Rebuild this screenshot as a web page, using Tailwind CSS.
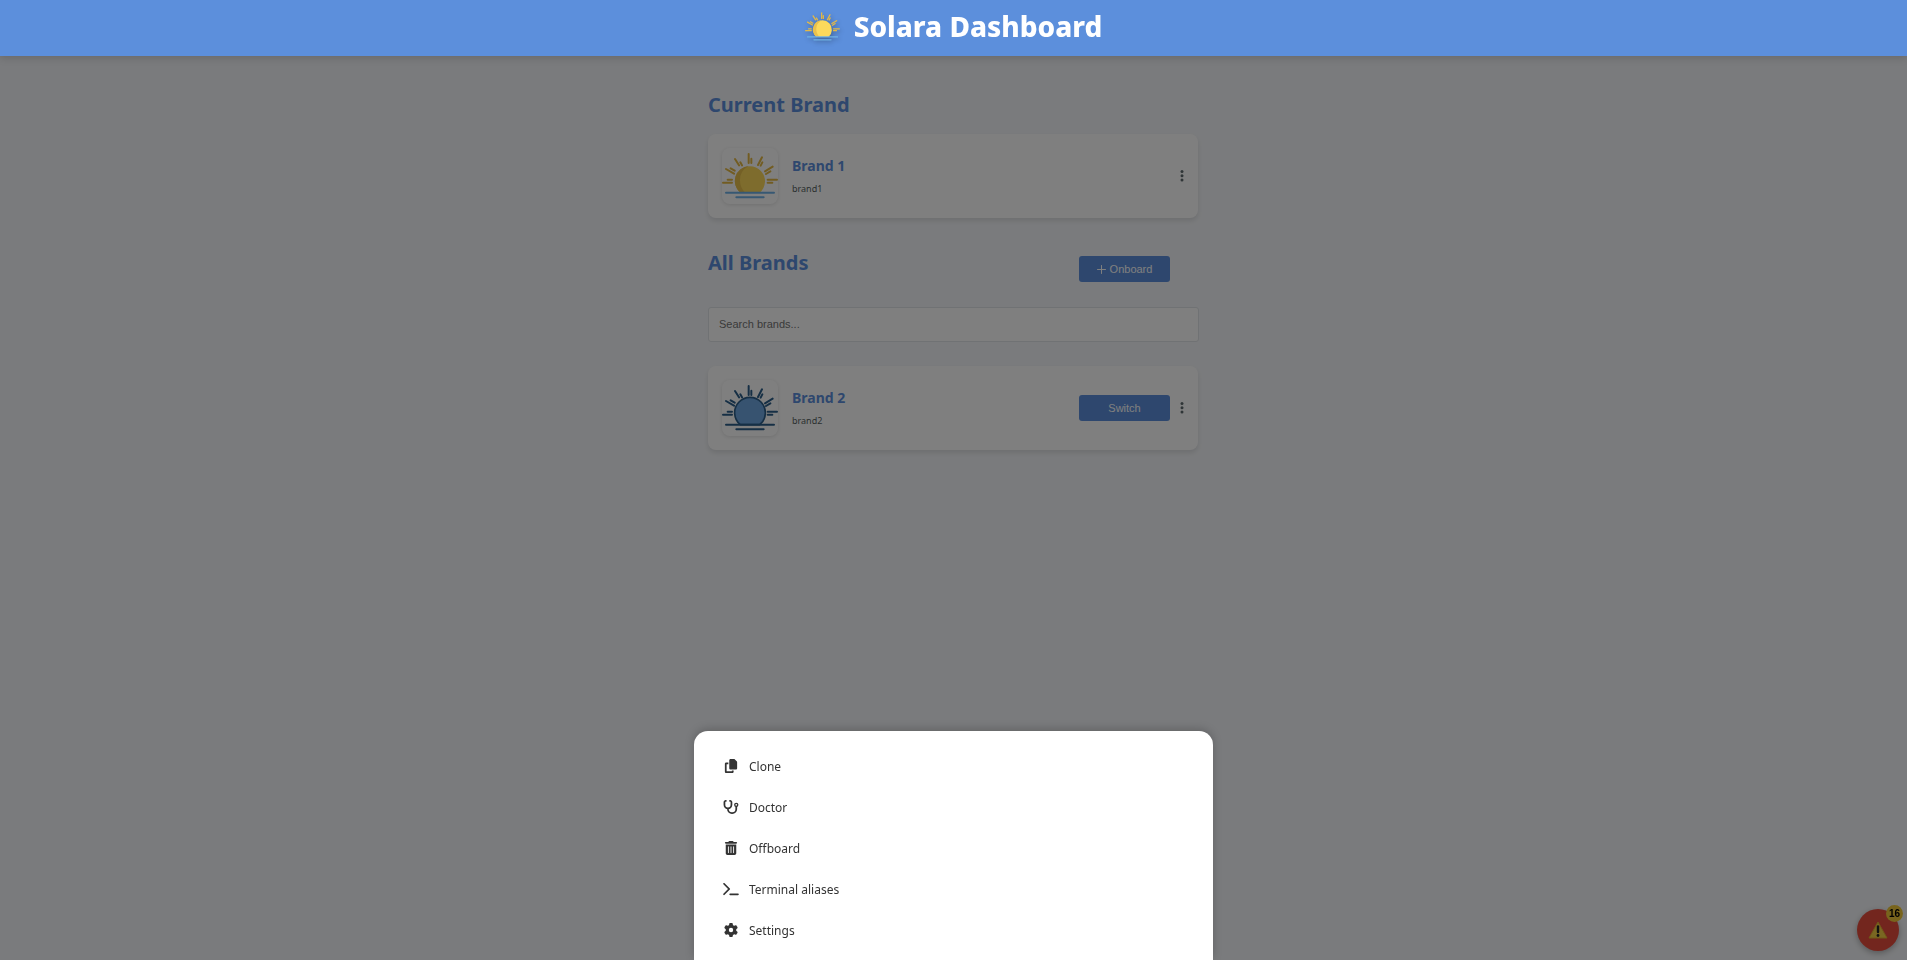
<!DOCTYPE html>
<html lang="en">
<head>
<meta charset="utf-8">
<meta name="viewport" content="width=device-width, initial-scale=1">
<title>Solara Dashboard</title>
<script src="https://cdn.jsdelivr.net/npm/@tailwindcss/browser@4"></script>
</head>
<body class="min-h-screen bg-[#f5f7fa] font-['Noto_Sans',sans-serif] text-[#333]">

<!-- Shared icon shapes -->
<svg class="hidden" aria-hidden="true">
  <symbol id="rays" viewBox="0 0 168 168">
    <g fill="none" stroke="currentColor" stroke-width="6" stroke-linecap="round">
      <path d="M80 18V45M88 32V45M39 33L51 52M55 43L60 52M12 63L36 77M26 61L38 68M3 104H30M17 95H30M137 95H165M137 104H151M129 70L152 56M132 78L145 70M120 28L108 51M121 43L116 53"/>
    </g>
  </symbol>
  <symbol id="sun-yellow" viewBox="0 0 168 168">
    <use href="#rays" width="168" height="168" color="#e5b944"/>
    <path d="M55 134A45 45 0 1 1 113 134Z" fill="#fcd95b"/>
    <path d="M55 134A45 45 0 0 1 80 54Q54 68 54 96Q54 120 70 134Z" fill="#e9c04c"/>
    <path d="M12 134H156M43 148H125" stroke="#6fb1e6" stroke-width="6" stroke-linecap="round"/>
  </symbol>
  <symbol id="sun-blue" viewBox="0 0 168 168">
    <use href="#rays" width="168" height="168" color="#2c5f8a"/>
    <path d="M55 134A46 46 0 1 1 113 134Z" fill="#6ea6e0" stroke="#2c5f8a" stroke-width="5"/>
    <path d="M12 134H156M43 148H125" stroke="#2c5f8a" stroke-width="6" stroke-linecap="round"/>
  </symbol>
  <symbol id="kebab" viewBox="0 0 4 14">
    <circle cx="2" cy="2.500" r="1.500"/><circle cx="2" cy="6.800" r="1.500"/><circle cx="2" cy="11.100" r="1.500"/>
  </symbol>
</svg>

<header class="relative z-20 flex h-14 items-center justify-center gap-3.5 bg-[#5c8fdc] pb-1 shadow-[0_2px_8px_rgba(0,0,0,0.15)]">
  <svg class="size-[35px] drop-shadow-[1px_2px_2px_rgba(0,0,0,0.3)]" aria-hidden="true"><use href="#sun-yellow"/></svg>
  <h1 class="text-[28px] leading-9 font-extrabold text-white">Solara Dashboard</h1>
</header>

<main class="mx-auto w-full max-w-[491px] pt-[35px]">
  <h2 class="text-xl leading-7 font-bold text-[#5c8fdc]">Current Brand</h2>
  <article class="mt-[15px] mr-px flex items-center rounded-lg bg-white p-3.5 shadow-[0_3px_5px_rgba(0,0,0,0.1)]">
    <svg class="size-14 rounded-lg shadow-[0_1px_4px_rgba(0,0,0,0.12)]" role="img" aria-label="Brand 1 logo"><use href="#sun-yellow"/></svg>
    <div class="ml-3.5 flex flex-1 flex-col gap-[5px]">
      <h3 class="text-sm leading-5 font-bold text-[#5c8fdc]">Brand 1</h3>
      <p class="text-[9px] leading-4 text-[#555f61]">brand1</p>
    </div>
    <button type="button" class="text-[#5f6b6e]" aria-label="Brand 1 options"><svg class="h-3.5 w-1 fill-current"><use href="#kebab"/></svg></button>
  </article>

  <div class="mt-[31px] flex items-start justify-between pr-[29px]">
    <h2 class="text-xl leading-7 font-bold text-[#5c8fdc]">All Brands</h2>
    <button type="button" class="mt-[7px] flex h-[26px] w-[91px] items-center justify-center gap-1 rounded-[3px] bg-[#5c8fdc] font-['Liberation_Sans',sans-serif] text-[11px] text-white">
      <svg class="size-[9px]" viewBox="0 0 9 9" fill="none" stroke="currentColor" stroke-linecap="round" aria-hidden="true"><path d="M4.500 .5V8.500M.5 4.500H8.500"/></svg>
      Onboard
    </button>
  </div>

  <input type="search" aria-label="Search brands" placeholder="Search brands..." class="mt-[25px] block h-[35px] w-full rounded-[3px] border border-[#e0e4e8] bg-white px-2.5 pb-0.5 font-['Liberation_Sans',sans-serif] text-[11px] placeholder:text-[#757575]">

  <article class="mt-6 mr-px flex items-center rounded-lg bg-white p-3.5 shadow-[0_3px_5px_rgba(0,0,0,0.1)]">
    <svg class="size-14 rounded-lg shadow-[0_1px_4px_rgba(0,0,0,0.12)]" role="img" aria-label="Brand 2 logo"><use href="#sun-blue"/></svg>
    <div class="ml-3.5 flex flex-1 flex-col gap-[5px]">
      <h3 class="text-sm leading-5 font-bold text-[#5c8fdc]">Brand 2</h3>
      <p class="text-[9px] leading-4 text-[#555f61]">brand2</p>
    </div>
    <button type="button" class="mr-2.5 h-[26px] w-[91px] rounded-[3px] bg-[#5c8fdc] font-['Liberation_Sans',sans-serif] text-[11px] text-white">Switch</button>
    <button type="button" class="text-[#5f6b6e]" aria-label="Brand 2 options"><svg class="h-3.5 w-1 fill-current"><use href="#kebab"/></svg></button>
  </article>
</main>

<button type="button" aria-label="16 issues" class="fixed right-2 bottom-[9px] flex size-[42px] items-center justify-center rounded-full bg-[#e74c3c] shadow-[0_2px_6px_rgba(0,0,0,0.3)]">
  <svg class="size-5" viewBox="0 0 20 20" aria-hidden="true">
    <path d="M10 2L19 18H1Z" fill="#f5cf45" stroke="#e0b030" stroke-linejoin="round"/>
    <path d="M10 6.500V12" stroke="#222" stroke-width="2.400" stroke-linecap="round"/><circle cx="10" cy="15.500" r="1.400" fill="#222"/>
  </svg>
  <span class="absolute -top-1 -right-1 flex size-[17px] items-center justify-center rounded-full bg-[#f1c93b] font-['Liberation_Sans',sans-serif] text-[10px] font-bold text-black">16</span>
</button>

<div class="fixed inset-0 z-10 bg-black/50"></div>

<div role="menu" class="fixed inset-x-0 bottom-0 z-30 mx-auto w-full max-w-[519px] rounded-t-[14px] bg-white pt-3.5 pb-2.5 text-xs shadow-[0_-2px_10px_rgba(0,0,0,0.2)]">
  <button type="button" role="menuitem" class="flex h-[41px] w-full items-center gap-2.5 px-[29px]">
    <svg class="h-3.5 w-4 fill-current" viewBox="0 0 448 512"><path d="M208 0H332.1c12.700 0 24.900 5.100 33.900 14.100l67.900 67.900c9 9 14.100 21.200 14.100 33.900V336c0 26.500-21.500 48-48 48H208c-26.500 0-48-21.500-48-48V48c0-26.500 21.500-48 48-48zM48 128h80v64H64V448H256V416h64v48c0 26.500-21.500 48-48 48H48c-26.500 0-48-21.500-48-48V176c0-26.500 21.500-48 48-48z"/></svg>
    <span class="pt-0.5">Clone</span>
  </button>
  <button type="button" role="menuitem" class="flex h-[41px] w-full items-center gap-2.5 px-[29px]">
    <svg class="h-3.5 w-4" viewBox="0 0 576 512" fill="none" stroke="currentColor" stroke-width="64" stroke-linecap="round"><path d="M98 30L76 37Q48 47 48 76V176a128 128 0 0 0 256 0V76Q304 47 276 37L254 30M176 304V336a144 144 0 0 0 144 144h16a144 144 0 0 0 144-144V240"/><circle cx="480" cy="176" r="56" stroke-width="48"/></svg>
    <span class="pt-0.5">Doctor</span>
  </button>
  <button type="button" role="menuitem" class="flex h-[41px] w-full items-center gap-2.5 px-[29px]">
    <svg class="h-3.5 w-4 fill-current" viewBox="0 0 448 512"><path d="M135.200 17.700C140.600 6.800 151.700 0 163.800 0H284.200c12.100 0 23.200 6.800 28.600 17.700L320 32h96c17.700 0 32 14.300 32 32s-14.300 32-32 32H32C14.300 96 0 81.700 0 64S14.300 32 32 32h96l7.200-14.300zM32 128H416V448c0 35.300-28.700 64-64 64H96c-35.300 0-64-28.700-64-64V128zm96 64c-8.800 0-16 7.200-16 16V432c0 8.800 7.200 16 16 16s16-7.200 16-16V208c0-8.800-7.200-16-16-16zm96 0c-8.800 0-16 7.200-16 16V432c0 8.800 7.200 16 16 16s16-7.200 16-16V208c0-8.800-7.200-16-16-16zm96 0c-8.800 0-16 7.200-16 16V432c0 8.800 7.200 16 16 16s16-7.200 16-16V208c0-8.800-7.200-16-16-16z"/></svg>
    <span class="pt-0.5">Offboard</span>
  </button>
  <button type="button" role="menuitem" class="flex h-[41px] w-full items-center gap-2.5 px-[29px]">
    <svg class="h-3.5 w-4 fill-current" viewBox="0 0 576 512"><path d="M9.400 86.600C-3.100 74.100-3.100 53.900 9.400 41.400s32.800-12.500 45.300 0l192 192c12.500 12.500 12.500 32.800 0 45.300l-192 192c-12.500 12.500-32.800 12.500-45.300 0s-12.500-32.800 0-45.300L178.700 256 9.400 86.600zM256 416H544c17.700 0 32 14.300 32 32s-14.300 32-32 32H256c-17.700 0-32-14.300-32-32s14.300-32 32-32z"/></svg>
    <span class="pt-0.5">Terminal aliases</span>
  </button>
  <button type="button" role="menuitem" class="flex h-[41px] w-full items-center gap-2.5 px-[29px]">
    <svg class="h-3.5 w-4 fill-current" viewBox="0 0 512 512"><path d="M495.900 166.600c3.200 8.700 .5 18.400-6.400 24.600l-43.300 39.400c1.100 8.300 1.700 16.800 1.700 25.400s-.6 17.100-1.700 25.400l43.300 39.400c6.900 6.200 9.600 15.900 6.400 24.600c-4.400 11.900-9.700 23.300-15.800 34.300l-4.700 8.100c-6.600 11-14 21.400-22.100 31.200c-5.900 7.200-15.700 9.600-24.500 6.800l-55.700-17.700c-13.400 10.300-28.200 18.900-44 25.400l-12.500 57.100c-2 9.100-9 16.300-18.200 17.800c-13.800 2.300-28 3.500-42.500 3.500s-28.700-1.200-42.500-3.500c-9.200-1.500-16.200-8.700-18.200-17.800l-12.500-57.100c-15.800-6.500-30.600-15.100-44-25.400L83.100 425.900c-8.800 2.800-18.600 .3-24.500-6.800c-8.100-9.800-15.500-20.200-22.100-31.200l-4.700-8.100c-6.100-11-11.400-22.400-15.800-34.300c-3.200-8.700-.5-18.400 6.400-24.600l43.300-39.400C64.600 273.100 64 264.600 64 256s.6-17.100 1.700-25.400L22.400 191.200c-6.900-6.200-9.600-15.900-6.400-24.600c4.400-11.900 9.700-23.300 15.800-34.300l4.700-8.100c6.600-11 14-21.400 22.100-31.200c5.900-7.200 15.700-9.600 24.500-6.800l55.700 17.700c13.400-10.300 28.200-18.900 44-25.400l12.500-57.100c2-9.100 9-16.300 18.200-17.800C227.300 1.200 241.500 0 256 0s28.700 1.200 42.500 3.500c9.200 1.500 16.200 8.700 18.200 17.800l12.500 57.100c15.800 6.500 30.600 15.100 44 25.400l55.700-17.700c8.800-2.800 18.600-.3 24.500 6.800c8.100 9.800 15.500 20.200 22.100 31.200l4.700 8.100c6.100 11 11.400 22.400 15.800 34.300zM256 336a80 80 0 1 0 0-160 80 80 0 1 0 0 160z"/></svg>
    <span class="pt-0.5">Settings</span>
  </button>
</div>
</body>
</html>
